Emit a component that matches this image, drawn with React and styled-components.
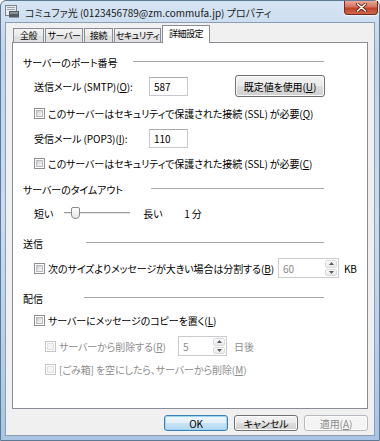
import React from 'react'
import styled, { createGlobalStyle } from 'styled-components'

const GlobalStyle = createGlobalStyle`
  html, body {
    margin: 0;
    padding: 0;
    background: #fff;
  }
  body {
    font-family: "Noto Sans CJK JP", "Noto Sans", sans-serif;
    font-size: 10px;
    letter-spacing: -0.1px;
    color: #000;
    font-feature-settings: "palt";
  }
`

const Window = styled.div`
  width: 380px;
  height: 441px;
  box-sizing: border-box;
  display: flex;
  flex-direction: column;
  padding: 0 4px 4px;
  border: 1px solid #5f7893;
  border-radius: 6px 6px 0 0;
  background: linear-gradient(180deg, #d6e5f4 0%, #bfd4eb 12%, #c9dcf0 50%, #a9c5e3 100%);
`

const TitleBar = styled.div`
  height: 21px;
  display: flex;
  align-items: center;
  gap: 5px;
`

const TitleText = styled.span`
  font-size: 10px;
  letter-spacing: 0;
  color: #1a1a1a;
  flex: 1;
  margin-top: 1px;
`

const CloseButton = styled.div`
  align-self: flex-start;
  margin-right: -3px;
  width: 34px;
  height: 14px;
  box-sizing: border-box;
  border: 1px solid #6d2b22;
  border-top: none;
  border-radius: 0 0 4px 4px;
  background: linear-gradient(180deg, #e9a99b 0%, #d6735e 45%, #c04227 55%, #d2654a 100%);
  box-shadow: 0 1px 2px rgba(255, 255, 255, 0.7);
  display: flex;
  align-items: center;
  justify-content: center;
`

const Client = styled.div`
  flex: 1;
  display: flex;
  flex-direction: column;
  background: #f0f0f0;
  border: 1px solid #8a9db3;
  padding: 2px 6px 4px;
  min-height: 0;
`

const TabStrip = styled.div`
  display: flex;
  align-items: flex-end;
  padding-left: 1px;
  gap: 1px;
  height: 17px;
`

const Tab = styled.div`
  position: relative;
  z-index: ${p => (p.$active ? 1 : 0)};
  width: ${p => p.$w}px;
  height: ${p => (p.$active ? '18px' : '14px')};
  margin-bottom: ${p => (p.$active ? '-1px' : '0')};
  box-sizing: border-box;
  padding-top: ${p => (p.$active ? '2px' : '0')};
  border: 1px solid #898c95;
  border-bottom: none;
  background: ${p => (p.$active ? '#fff' : 'linear-gradient(180deg, #f3f3f3 0%, #ebebeb 50%, #dedede 51%, #e2e2e2 100%)')};
  display: flex;
  justify-content: center;
  align-items: ${p => (p.$active ? 'flex-start' : 'center')};
  font-size: 9px;
  letter-spacing: -0.5px;
  line-height: 12px;
  white-space: nowrap;
  overflow: hidden;
`

const Panel = styled.div`
  flex: 1;
  background: #fff;
  border: 1px solid #898c95;
  display: flex;
  flex-direction: column;
  padding: 12px 0 0 10px;
`

const Header = styled.div`
  width: 301px;
  height: 14px;
  margin-top: ${p => p.$mt || 0}px;
  display: flex;
  align-items: center;
  justify-content: space-between;
  white-space: nowrap;
`

const Rule = styled.div`
  width: ${p => p.$w}px;
  height: 1px;
  background: #a8a8a8;
  border-bottom: 1px solid #fff;
`

const Row = styled.div`
  height: ${p => p.$h || 16}px;
  margin-top: ${p => p.$mt || 0}px;
  padding-left: ${p => p.$indent || 11}px;
  display: flex;
  align-items: center;
  white-space: nowrap;
  color: ${p => (p.$disabled ? '#8d8d8d' : '#000')};
`

const Label = styled.span`
  width: ${p => (p.$w ? `${p.$w}px` : 'auto')};
  margin-left: ${p => p.$ml || 0}px;
  flex: none;
`

const U = styled.u`
  text-decoration: underline;
  text-underline-offset: 1px;
`

const TextBox = styled.div`
  width: ${p => p.$w}px;
  height: 19px;
  box-sizing: border-box;
  border: 1px solid #c7c9cc;
  border-top-color: #a9abaf;
  background: #fff;
  padding-left: 4px;
  display: flex;
  align-items: center;
`

const SpinBox = styled.div`
  width: ${p => p.$w}px;
  height: 20px;
  box-sizing: border-box;
  border: 1px solid #c9cbce;
  background: #fff;
  display: flex;
  color: #8a8a8a;
`

const SpinValue = styled.div`
  flex: 1;
  padding-left: 4px;
  display: flex;
  align-items: center;
`

const SpinButtons = styled.div`
  width: 12px;
  display: flex;
  flex-direction: column;
  gap: 1px;
  padding: 1px;
`

const SpinButton = styled.div`
  flex: 1;
  border: 1px solid #d9dbde;
  border-radius: 2px;
  background: linear-gradient(180deg, #fafafa, #eaeaea);
  display: flex;
  align-items: center;
  justify-content: center;
`

const Button = styled.div`
  width: ${p => p.$w || 64}px;
  height: ${p => p.$h || 16}px;
  margin-left: ${p => p.$ml || 0}px;
  box-sizing: border-box;
  border: 1px solid ${p => (p.$default ? '#3c7fb1' : p.$disabled ? '#b5b9bc' : '#707070')};
  border-radius: 3px;
  background: ${p =>
    p.$disabled
      ? '#f4f4f4'
      : p.$default
        ? 'linear-gradient(180deg, #eef7fc 0%, #e1f0fa 48%, #c8e4f6 52%, #b4d9f1 100%)'
        : 'linear-gradient(180deg, #f2f2f2 0%, #ebebeb 48%, #dddddd 52%, #cfcfcf 100%)'};
  box-shadow: inset 0 0 0 1px ${p => (p.$default ? '#9fd5f5' : '#fcfcfc')};
  display: flex;
  align-items: center;
  justify-content: center;
  color: ${p => (p.$disabled ? '#8c8c8c' : '#000')};
`

const CheckBox = styled.span`
  width: 11px;
  height: 11px;
  box-sizing: border-box;
  flex: none;
  border: 1px solid ${p => (p.$disabled ? '#c5c5c5' : '#8f8f8f')};
  background: #fff;
  padding: 1px;
  display: flex;
  margin-right: 3px;

  &::after {
    content: '';
    flex: 1;
    border: 1px solid ${p => (p.$disabled ? '#e0e0e0' : '#b8babd')};
    background: ${p => (p.$disabled ? '#f4f4f4' : 'linear-gradient(135deg, #c9ccd1 0%, #e8e9ea 60%, #f7f7f7 100%)')};
  }
`

const Slider = styled.div`
  width: 66px;
  margin: 0 13px 0 11px;
  display: flex;
  align-items: center;
`

const Rail = styled.div`
  width: ${p => (p.$w ? `${p.$w}px` : 'auto')};
  flex: ${p => (p.$w ? 'none' : 1)};
  height: 1px;
  background: #9b9b9b;
  border-bottom: 1px solid #e6e6e6;
`

const Thumb = styled.div`
  width: 9px;
  height: 12px;
  box-sizing: border-box;
  border: 1px solid #8a8a8a;
  border-radius: 2px 2px 4px 4px;
  background: linear-gradient(180deg, #fdfdfd, #e4e4e4);
`

const ButtonRow = styled.div`
  display: flex;
  justify-content: flex-end;
  gap: 6px;
  margin-top: 6px;
`

function Check({ disabled, width, children }) {
  return (
    <>
      <CheckBox $disabled={disabled} />
      <Label $w={width}>{children}</Label>
    </>
  )
}

function Spinner({ w, value }) {
  return (
    <SpinBox $w={w}>
      <SpinValue>{value}</SpinValue>
      <SpinButtons>
        <SpinButton>
          <svg width="5" height="3" viewBox="0 0 5 3"><path d="M2.5 0 L5 3 L0 3 Z" fill="#5a5a5a" /></svg>
        </SpinButton>
        <SpinButton>
          <svg width="5" height="3" viewBox="0 0 5 3"><path d="M0 0 L5 0 L2.5 3 Z" fill="#5a5a5a" /></svg>
        </SpinButton>
      </SpinButtons>
    </SpinBox>
  )
}

function AppIcon() {
  return (
    <svg width="15" height="13" viewBox="0 0 15 13">
      <rect x="0.5" y="0.5" width="11" height="10" fill="#e8ecef" stroke="#7d858c" />
      <rect x="2" y="2" width="8" height="1" fill="#9aa3ab" />
      <rect x="2" y="4" width="8" height="1" fill="#9aa3ab" />
      <rect x="4" y="6" width="10" height="6.5" fill="#525a62" />
      <rect x="5" y="7" width="8" height="2" fill="#8b949c" />
    </svg>
  )
}

const tabs = [
  { label: '全般', w: 31 },
  { label: 'サーバー', w: 38 },
  { label: '接続', w: 29 },
  { label: 'セキュリティ', w: 47 },
  { label: '詳細設定', w: 48, active: true },
]

export default function App() {
  return (
    <>
      <GlobalStyle />
      <Window>
        <TitleBar>
          <AppIcon />
          <TitleText>コミュファ光 (0123456789@zm.commufa.jp) プロパティ</TitleText>
          <CloseButton>
            <svg width="11" height="9" viewBox="0 0 11 9">
              <path d="M1.5 1 L9.5 8 M9.5 1 L1.5 8" stroke="#5a1a10" strokeWidth="3" strokeLinecap="round" />
              <path d="M1.5 1 L9.5 8 M9.5 1 L1.5 8" stroke="#fff" strokeWidth="1.6" strokeLinecap="round" />
            </svg>
          </CloseButton>
        </TitleBar>
        <Client>
          <TabStrip>
            {tabs.map(t => (
              <Tab key={t.label} $w={t.w} $active={t.active}>{t.label}</Tab>
            ))}
          </TabStrip>
          <Panel>
            <Header>
              <span>サーバーのポート番号</span>
              <Rule $w={191} />
            </Header>
            <Row $h={22} $mt={6}>
              <Label $w={115}>送信メール (SMTP)(<U>O</U>):</Label>
              <TextBox $w={39}>587</TextBox>
              <Button $w={90} $h={22} $ml={47}>既定値を使用(<U>U</U>)</Button>
            </Row>
            <Row $mt={8}>
              <Check>このサーバーはセキュリティで保護された接続 (SSL) が必要(<U>Q</U>)</Check>
            </Row>
            <Row $h={20} $mt={7}>
              <Label $w={115}>受信メール (POP3)(<U>I</U>):</Label>
              <TextBox $w={39}>110</TextBox>
            </Row>
            <Row $mt={7}>
              <Check>このサーバーはセキュリティで保護された接続 (SSL) が必要(<U>C</U>)</Check>
            </Row>
            <Header $mt={11}>
              <span>サーバーのタイムアウト</span>
              <Rule $w={173} />
            </Header>
            <Row $mt={9}>
              <span>短い</span>
              <Slider>
                <Rail $w={7} />
                <Thumb />
                <Rail />
              </Slider>
              <Label $w={41}>長い</Label>
              <span>1 分</span>
            </Row>
            <Header $mt={15}>
              <span>送信</span>
              <Rule $w={238} />
            </Header>
            <Row $h={20} $mt={8}>
              <Check width={230}>次のサイズよりメッセージが大きい場合は分割する(<U>B</U>)</Check>
              <Spinner w={61} value="60" />
              <Label $ml={5}>KB</Label>
            </Row>
            <Header $mt={13}>
              <span>配信</span>
              <Rule $w={240} />
            </Header>
            <Row $mt={7}>
              <Check>サーバーにメッセージのコピーを置く(<U>L</U>)</Check>
            </Row>
            <Row $h={20} $mt={8} $indent={22} $disabled>
              <Check disabled width={119}>サーバーから削除する(<U>R</U>)</Check>
              <Spinner w={49} value="5" />
              <Label $ml={7}>日後</Label>
            </Row>
            <Row $mt={5} $indent={22} $disabled>
              <Check disabled>[ごみ箱] を空にしたら、サーバーから削除(<U>M</U>)</Check>
            </Row>
          </Panel>
          <ButtonRow>
            <Button $default>OK</Button>
            <Button>キャンセル</Button>
            <Button $disabled>適用(<U>A</U>)</Button>
          </ButtonRow>
        </Client>
      </Window>
    </>
  )
}
